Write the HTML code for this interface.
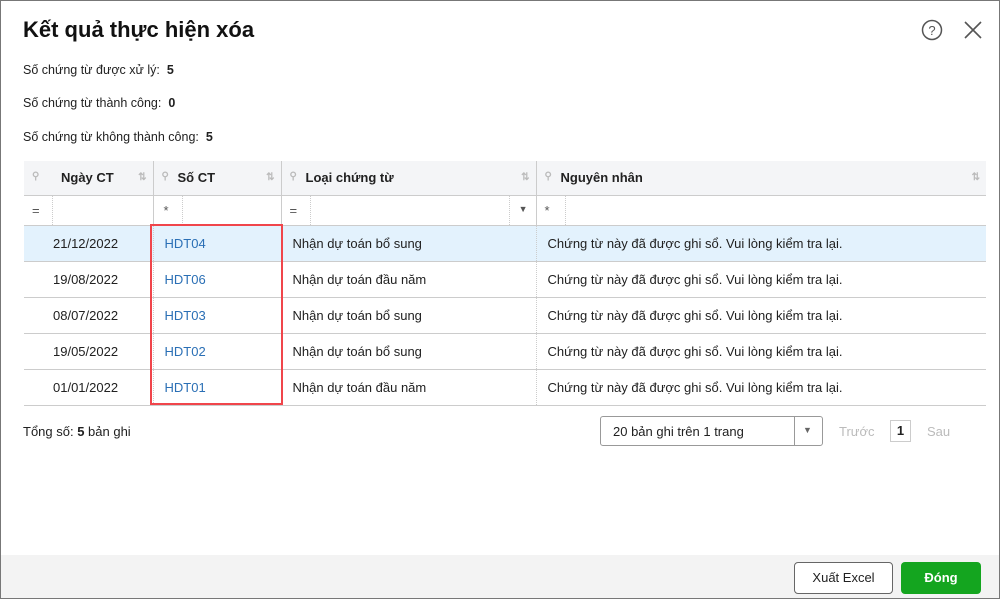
<!DOCTYPE html><html><head><meta charset="utf-8"><style>
*{box-sizing:border-box;margin:0;padding:0}
body{width:1000px;height:599px;background:#fff;font-family:"Liberation Sans",sans-serif;font-size:13px;color:#212121;position:relative;overflow:hidden}
.frame{position:absolute;left:0;top:0;width:1000px;height:599px;border:1px solid #777}
.abs{position:absolute}
h1{position:absolute;left:23px;top:17px;font-size:22px;font-weight:bold;color:#111}
.lbl{position:absolute;left:23px;font-size:12.5px}
table{position:absolute;left:24px;top:161px;width:962px;border-collapse:collapse;table-layout:fixed}
td,th{height:36px;border-bottom:1px solid #ccc;padding:0;font-weight:normal;text-align:left;font-size:13px}
th{background:#f4f5f7;font-weight:bold;height:34px;border-right:1px solid #ccc;position:relative}
tr.f td{height:30px;border-right:1px solid #ccc;color:#555;position:relative}
td{border-right:1px dotted #ccc}
.sel td{background:#e3f2fd}
a{color:#2a6fb5;text-decoration:none}
.sort{position:absolute;right:6px;top:11px;color:#bbb;font-size:10px}
.pin{position:absolute;left:8px;top:10px;color:#bbb;font-size:10px}
</style></head><body>
<div class="frame"></div>
<h1>Kết quả thực hiện xóa</h1>
<svg class="abs" style="left:921px;top:19px" width="22" height="22"><circle cx="11" cy="11" r="9.5" fill="none" stroke="#555" stroke-width="1.5"/><text x="11" y="16" font-size="13" text-anchor="middle" fill="#555" font-family="Liberation Sans">?</text></svg>
<svg class="abs" style="left:963px;top:20px" width="20" height="20"><path d="M2 2L18 18M18 2L2 18" stroke="#555" stroke-width="1.6"/></svg>
<div class="lbl" style="top:63px">Số chứng từ được xử lý: &nbsp;<b>5</b></div>
<div class="lbl" style="top:96px">Số chứng từ thành công: &nbsp;<b>0</b></div>
<div class="lbl" style="top:130px">Số chứng từ không thành công: &nbsp;<b>5</b></div>
<table>
<colgroup><col style="width:129px"><col style="width:128px"><col style="width:255px"><col style="width:450px"></colgroup>
<tr><th><span class="pin">⚲</span><span style="padding-left:37px">Ngày CT</span><span class="sort">⇅</span></th><th><span class="pin">⚲</span><span style="padding-left:24px">Số CT</span><span class="sort">⇅</span></th><th><span class="pin">⚲</span><span style="padding-left:24px">Loại chứng từ</span><span class="sort">⇅</span></th><th style="border-right:none"><span class="pin">⚲</span><span style="padding-left:24px">Nguyên nhân</span><span class="sort">⇅</span></th></tr>
<tr class="f"><td style="padding-left:8px">=<span class="abs" style="left:28px;top:0;height:29px;border-left:1px dotted #ccc"></span></td><td style="padding-left:10px">*<span class="abs" style="left:28px;top:0;height:29px;border-left:1px dotted #ccc"></span></td><td style="padding-left:8px">=<span class="abs" style="left:28px;top:0;height:29px;border-left:1px dotted #ccc"></span><span class="abs" style="right:8px;top:8px;font-size:9px">▼</span><span class="abs" style="right:26px;top:0;height:29px;border-left:1px dotted #ccc"></span></td><td style="padding-left:8px;border-right:none">*<span class="abs" style="left:28px;top:0;height:29px;border-left:1px dotted #ccc"></span></td></tr>
<tr class="sel"><td style="padding-left:29px">21/12/2022</td><td style="padding-left:11px"><a>HDT04</a></td><td style="padding-left:11px">Nhận dự toán bổ sung</td><td style="padding-left:11px;border-right:none">Chứng từ này đã được ghi sổ. Vui lòng kiểm tra lại.</td></tr>
<tr><td style="padding-left:29px">19/08/2022</td><td style="padding-left:11px"><a>HDT06</a></td><td style="padding-left:11px">Nhận dự toán đầu năm</td><td style="padding-left:11px;border-right:none">Chứng từ này đã được ghi sổ. Vui lòng kiểm tra lại.</td></tr>
<tr><td style="padding-left:29px">08/07/2022</td><td style="padding-left:11px"><a>HDT03</a></td><td style="padding-left:11px">Nhận dự toán bổ sung</td><td style="padding-left:11px;border-right:none">Chứng từ này đã được ghi sổ. Vui lòng kiểm tra lại.</td></tr>
<tr><td style="padding-left:29px">19/05/2022</td><td style="padding-left:11px"><a>HDT02</a></td><td style="padding-left:11px">Nhận dự toán bổ sung</td><td style="padding-left:11px;border-right:none">Chứng từ này đã được ghi sổ. Vui lòng kiểm tra lại.</td></tr>
<tr><td style="padding-left:29px">01/01/2022</td><td style="padding-left:11px"><a>HDT01</a></td><td style="padding-left:11px">Nhận dự toán đầu năm</td><td style="padding-left:11px;border-right:none">Chứng từ này đã được ghi sổ. Vui lòng kiểm tra lại.</td></tr>
</table>
<div class="abs" style="left:150px;top:224px;width:133px;height:181px;border:2px solid #f0454b"></div>
<div class="abs" style="left:23px;top:424px">Tổng số: <b>5</b> bản ghi</div>
<div class="abs" style="left:600px;top:416px;width:223px;height:30px;border:1px solid #999;border-radius:3px"><span class="abs" style="left:12px;top:7px">20 bản ghi trên 1 trang</span><span class="abs" style="left:193px;top:0;height:28px;border-left:1px solid #999"></span><span class="abs" style="left:202px;top:8px;font-size:9px;color:#666">▼</span></div>
<div class="abs" style="left:839px;top:424px;color:#bbb">Trước</div>
<div class="abs" style="left:890px;top:420px;width:21px;height:22px;border:1px solid #ccc;text-align:center;line-height:20px;font-weight:bold">1</div>
<div class="abs" style="left:927px;top:424px;color:#bbb">Sau</div>
<div class="abs" style="left:1px;top:555px;width:998px;height:43px;background:#f3f3f3"></div>
<div class="abs" style="left:794px;top:562px;width:99px;height:32px;border:1px solid #666;border-radius:4px;background:#fff;text-align:center;line-height:30px">Xuất Excel</div>
<div class="abs" style="left:901px;top:562px;width:80px;height:32px;border-radius:4px;background:#14a51f;color:#fff;font-weight:bold;text-align:center;line-height:32px">Đóng</div>
</body></html>
